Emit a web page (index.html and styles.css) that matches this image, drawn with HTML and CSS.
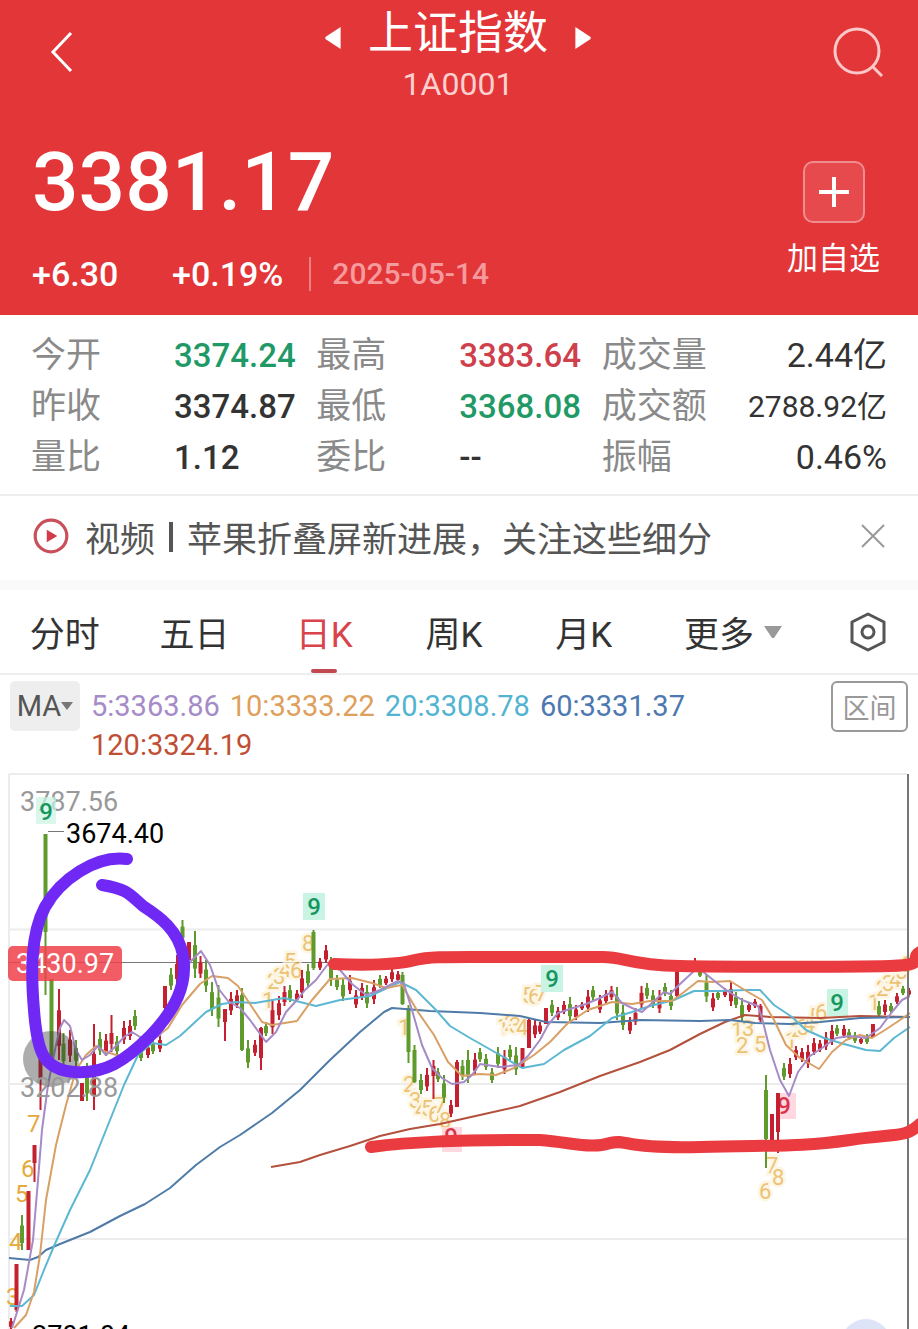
FILE: index.html
```
<!DOCTYPE HTML>
<html lang="zh-CN">
<head>
	<meta charset="UTF-8">
	<meta name="viewport" content="width=device-width, initial-scale=1">
	<title>上证指数</title>
	<link rel="stylesheet" href="styles.css">
</head>
<body>
	<header class="quote">
		<div class="bar">
			<button class="icon-btn" aria-label="返回">
				<svg width="24" height="44" viewBox="0 0 24 44"><path d="M21 3L3 22L21 41" fill="none" stroke="#fff" stroke-width="3"/></svg>
			</button>
			<div class="title">
				<div class="name">
					<button class="icon-btn" aria-label="上一个"><svg width="18" height="24" viewBox="0 0 16 22"><path d="M15 1V21L1 12V10Z" fill="#fff"/></svg></button>
					<h1>上证指数</h1>
					<button class="icon-btn" aria-label="下一个"><svg width="18" height="24" viewBox="0 0 16 22"><path d="M1 1V21L15 12V10Z" fill="#fff"/></svg></button>
				</div>
				<div class="code">1A0001</div>
			</div>
			<button class="icon-btn search" aria-label="搜索">
				<svg width="52" height="52" viewBox="0 0 52 52" fill="none" stroke="#fcc8c8" stroke-width="3"><circle cx="25" cy="25" r="22"/><path d="M41 41L50 50"/></svg>
			</button>
		</div>
		<div class="now">
			<div>
				<div class="price">3381.17</div>
				<div class="change">
					<span class="diff">+6.30</span>
					<span class="rate">+0.19%</span>
					<time>2025-05-14</time>
				</div>
			</div>
			<button class="add">
				<span class="plus"><svg width="30" height="30" viewBox="0 0 30 30"><path d="M15 0V30M0 15H30" stroke="#fff" stroke-width="4"/></svg></span>
				加自选
			</button>
		</div>
	</header>

	<dl class="stats">
		<div><dt>今开</dt><dd class="fall">3374.24</dd></div>
		<div><dt>最高</dt><dd class="rise">3383.64</dd></div>
		<div class="last"><dt>成交量</dt><dd>2.44亿</dd></div>
		<div><dt>昨收</dt><dd>3374.87</dd></div>
		<div><dt>最低</dt><dd class="fall">3368.08</dd></div>
		<div class="last"><dt>成交额</dt><dd class="long">2788.92亿</dd></div>
		<div><dt>量比</dt><dd>1.12</dd></div>
		<div><dt>委比</dt><dd>--</dd></div>
		<div class="last"><dt>振幅</dt><dd>0.46%</dd></div>
	</dl>

	<div class="news">
		<svg width="38" height="38" viewBox="0 0 36 36"><circle cx="18" cy="18" r="15" fill="none" stroke="#c9505b" stroke-width="3"/><path d="M14 12V24L24 18Z" fill="#d23c4a"/></svg>
		<a href="#">视频<i></i>苹果折叠屏新进展，关注这些细分</a>
		<button class="icon-btn" aria-label="关闭">
			<svg width="26" height="26" viewBox="0 0 26 26"><path d="M2 2L24 24M24 2L2 24" stroke="#999" stroke-width="2"/></svg>
		</button>
	</div>

	<nav class="tabs">
		<a href="#">分时</a>
		<a href="#">五日</a>
		<a class="active" href="#">日K</a>
		<a href="#">周K</a>
		<a href="#">月K</a>
		<a href="#">更多<svg width="20" height="14" viewBox="0 0 20 14"><path d="M1 1H19L11 13H9Z" fill="#999"/></svg></a>
		<button class="icon-btn" aria-label="设置">
			<svg width="38" height="40" viewBox="0 0 38 40" fill="none" stroke="#555" stroke-width="3" stroke-linejoin="round"><path d="M19 2L35 10V30L19 38L3 30V10Z"/><circle cx="19" cy="20" r="6"/></svg>
		</button>
	</nav>

	<div class="ma">
		<button class="ma-btn">MA<svg width="12" height="8" viewBox="0 0 12 8"><path d="M0 0H12L6 8Z" fill="#777"/></svg></button>
		<div class="ma-list">
			<span class="ma5">5:3363.86</span>
			<span class="ma10">10:3333.22</span>
			<span class="ma20">20:3308.78</span>
			<span class="ma60">60:3331.37</span>
			<span class="ma120">120:3324.19</span>
		</div>
		<button class="range">区间</button>
	</div>

	<svg class="chart" viewBox="0 770 918 559">
		<!-- grid -->
		<path class="grid" d="M9 774H907M9 929.500H907M9 1084H907M9 1239H907M9 774V1329"/>
		<path class="cross" d="M9 962.500H907"/>
		<text class="scale" x="20" y="811">3787.56</text>
		<rect x="36" y="797" width="20" height="27" fill="#c9f3e2" opacity=".7"/>
		<text class="nine" x="46" y="820">9</text>
		<path d="M48 831.500H64" stroke="#777"/>
		<text class="peak" x="66" y="843">3674.40</text>
		<text class="peak" x="32" y="1345">2701.04</text>

		<g class="seq">
			<text x="27" y="1132" font-size="24">7</text>
			<text x="21" y="1177" font-size="24">6</text>
			<text x="15" y="1202" font-size="24">5</text>
			<text x="9" y="1250" font-size="24">4</text>
			<text x="6" y="1305" font-size="24">3</text>
		</g>
		<g class="seq glow">
			<text x="262" y="1008">1</text><text x="267" y="989">2</text><text x="273" y="984">3</text><text x="279" y="977">4</text><text x="284" y="969">5</text><text x="290" y="978">6</text><text x="302" y="951">8</text>
			<text x="398" y="1035">1</text><text x="403" y="1092">2</text><text x="409" y="1108">3</text><text x="415" y="1117">4</text><text x="421" y="1116">5</text><text x="428" y="1122">6</text><text x="434" y="1113">7</text><text x="439" y="1128">8</text>
			<text x="497" y="1034">1</text><text x="504" y="1031">2</text><text x="509" y="1033">3</text><text x="516" y="1035">4</text><text x="522" y="1003">5</text><text x="528" y="1004">6</text><text x="535" y="1001">7</text>
			<text x="731" y="1038">1</text><text x="736" y="1053">2</text><text x="742" y="1036">3</text><text x="754" y="1052">5</text>
			<text x="759" y="1199">6</text><text x="766" y="1173">7</text><text x="772" y="1185">8</text>
			<text x="785" y="1048">1</text><text x="791" y="1037">2</text><text x="797" y="1035">3</text><text x="803" y="1031">4</text><text x="809" y="1024">5</text><text x="815" y="1020">6</text>
			<text x="868" y="1010">1</text><text x="876" y="996">2</text><text x="882" y="991">3</text><text x="889" y="987">4</text><text x="895" y="979">5</text><text x="900" y="972">6</text>
		</g>
		<g fill="#c9f3e2">
			<rect x="303" y="893" width="22" height="27"/>
			<rect x="541" y="965" width="22" height="27"/>
			<rect x="827" y="989" width="21" height="27"/>
		</g>
		<text class="nine" x="314" y="915">9</text>
		<text class="nine" x="552" y="987">9</text>
		<text class="nine" x="837" y="1011">9</text>
		<g fill="#ffd9df">
			<rect x="442" y="1127" width="20" height="25"/>
			<rect x="776" y="1093" width="20" height="26"/>
		</g>
		<text class="nine low" x="451" y="1145">9</text>
		<text class="nine low" x="784" y="1114">9</text>

		<g id="candles"></g>

		<!-- moving averages -->
		<g class="lines">
			<polyline class="ma120" points="271,1167 300,1162 320,1155 350,1146 380,1136 410,1129 440,1124 480,1115 520,1106 560,1092 600,1076 640,1062 670,1050 700,1034 725,1022 745,1015 770,1017 820,1018 860,1016 910,1017"/>
			<polyline class="ma60" points="9,1258 30,1260 38,1257 46,1250 60,1244 90,1232 120,1216 145,1204 170,1188 196,1165 220,1147 240,1135 272,1113 300,1090 330,1060 360,1032 384,1012 392,1008 430,1011 480,1013 520,1016 546,1022 600,1023 640,1020 700,1021 730,1020 755,1023 790,1024 820,1022 860,1018 910,1017"/>
			<polyline class="ma20" points="10,1306 22,1306 34,1295 44,1270 54,1246 70,1210 90,1170 106,1130 124,1085 138,1055 152,1043 166,1045 180,1036 206,1012 222,1004 236,1002 255,1003 284,998 316,1006 340,1000 370,996 400,982 416,990 436,1010 450,1026 470,1038 500,1055 522,1068 544,1064 564,1050 590,1036 612,1018 632,1012 650,1006 674,1000 694,991 720,991 746,990 760,990 774,1005 792,1017 806,1030 824,1038 844,1044 866,1050 880,1051 894,1038 910,1027"/>
			<polyline class="ma10" points="14,1328 26,1315 34,1292 40,1255 46,1200 56,1145 66,1105 76,1070 86,1055 96,1046 106,1052 120,1056 136,1045 155,1038 168,1028 182,1005 200,984 212,976 228,978 238,986 250,1004 262,1022 272,1025 297,1021 312,1000 330,979 352,978 372,983 386,988 402,985 418,1012 434,1035 448,1062 462,1076 480,1074 496,1075 514,1068 534,1055 550,1042 568,1023 588,1010 612,1002 632,1004 650,1001 672,1001 684,992 698,981 712,982 730,981 748,992 762,1000 774,1020 786,1045 800,1058 819,1069 832,1052 846,1040 860,1035 872,1038 885,1030 900,1020 910,1013"/>
			<polyline class="ma5" points="12,1328 24,1290 33,1240 38,1180 42,1130 48,1085 56,1045 60,1028 64,1020 70,1026 76,1050 82,1060 90,1055 98,1046 106,1055 116,1046 124,1037 132,1032 140,1037 150,1040 160,1035 170,1015 180,985 190,962 201,951 210,965 218,988 228,1001 240,1008 250,1020 266,1042 276,1032 286,1012 297,1000 305,990 316,980 328,964 340,970 352,984 366,995 380,990 398,981 404,984 412,1010 422,1045 432,1068 442,1078 452,1084 464,1082 472,1075 480,1064 500,1067 518,1065 528,1056 540,1040 548,1025 558,1013 570,1009 586,1004 600,998 612,992 622,1003 632,1008 642,1012 652,1003 664,992 670,994 680,984 694,971 702,971 712,979 726,990 742,1000 758,1006 762,1018 770,1050 780,1080 789,1096 798,1072 810,1056 822,1048 836,1038 850,1036 866,1038 880,1028 892,1012 902,1000 910,996"/>
		</g>
		<path d="M908 774V1329" stroke="#777" stroke-width="2"/>

		<rect x="8" y="946" width="114" height="35" rx="5" fill="#f0404a" opacity=".85"/>
		<text class="cursor" x="16" y="973">3430.97</text>
		<circle cx="51" cy="1059" r="28" fill="#333" opacity=".4"/>
		<text class="scale" x="20" y="1097">3202.88</text>
		<circle cx="866" cy="1344" r="25" fill="#dde4f8"/>

		<!-- pen marks -->
		<g class="pen">
			<path class="red" d="M334 964C380 966 400 964 415 960S450 957 520 957H600C625 956 625 965 680 966S850 967 890 966S908 958 920 952"/>
			<path class="red" d="M371 1147C410 1142 450 1140 540 1140C575 1143 592 1149 610 1143C630 1139 620 1149 700 1147S800 1147 850 1140S905 1138 920 1124"/>
			<path class="violet" d="M127 859C95 855 60 880 45 907C30 935 31 975 34 1010C37 1050 42 1070 75 1072C105 1074 125 1061 150 1036C175 1010 188 985 183 955C178 930 160 917 143 906C130 895 128 889 102 885"/>
		</g>
	</svg>
	<script src="chart.js"></script>
</body>
</html>
```
FILE: styles.css
```
* {
    box-sizing: border-box;
}
body {
    margin: 0;
    background: #fff;
    color: #333;
    font-family: Roboto, "Noto Sans CJK SC", sans-serif;
    overflow-x: hidden;
}
button {
    border: 0;
    padding: 0;
    background: none;
    color: inherit;
    font: inherit;
}
a {
    color: inherit;
    text-decoration: none;
}
svg {
    display: block;
}
.icon-btn {
    display: flex;
}

/* header */
.quote {
    height: 315px;
    padding: 0 38px 0 32px;
    background: #e23639;
    color: #fff;
}
.bar {
    display: grid;
    grid-template-columns: 1fr auto 1fr;
    align-items: center;
    height: 104px;
    margin-right: -4px;
}
.bar > .icon-btn {
    padding-left: 18px;
}
.bar > .search {
    justify-self: end;
}
.title {
    text-align: center;
}
.name {
    display: flex;
    align-items: center;
    gap: 26px;
    height: 64px;
    padding-top: 12px;
}
.name h1 {
    margin: -8px 0 0;
    font-size: 45px;
    font-weight: 400;
    line-height: 56px;
}
.code {
    font-size: 32px;
    line-height: 40px;
    color: #fdd0d0;
}
.now {
    display: flex;
    justify-content: space-between;
}
.price {
    padding-top: 28px;
    font-size: 82px;
    font-weight: 500;
    line-height: 100px;
}
.change {
    display: flex;
    align-items: center;
    padding-top: 22px;
    font-size: 34px;
    font-weight: 500;
    line-height: 40px;
}
.diff {
    width: 140px;
}
.change time {
    margin-left: 26px;
    padding-left: 21px;
    border-left: 2px solid #ef8082;
    font-size: 30px;
    line-height: 34px;
    color: #f59b9d;
}
.add {
    display: flex;
    flex-direction: column;
    align-items: center;
    padding-top: 57px;
    align-self: flex-start;
    font-size: 31px;
    line-height: 40px;
    gap: 16px;
}
.plus {
    display: grid;
    place-items: center;
    width: 62px;
    height: 62px;
    border: 2px solid #f08d8f;
    border-radius: 10px;
    background: #e64a4c;
}

/* figures */
.stats {
    display: grid;
    grid-template-columns: 1fr 1fr 1fr;
    margin: 0;
    padding: 15px 31px 11px;
    border-bottom: 2px solid #eee;
    line-height: 51px;
}
.stats div {
    display: flex;
}
.stats dt {
    width: 143px;
    font-size: 35px;
    color: #8a8a8a;
}
.stats dd {
    margin: 0;
    font-size: 33px;
    font-weight: 500;
}
.stats .last {
    justify-content: space-between;
}
.stats .last dt {
    width: auto;
}
.stats .last dd {
    font-weight: 400;
    font-size: 34px;
}
.stats .last .long {
    font-size: 30px;
}
.stats .fall {
    color: #1f9a67;
}
.stats .rise {
    color: #cf404d;
}

/* news */
.news {
    display: flex;
    align-items: center;
    height: 94px;
    padding: 0 32px 4px;
    border-bottom: 10px solid #fafafa;
    font-size: 35px;
    color: #555;
}
.news a {
    flex: 1;
    margin-left: 15px;
    white-space: nowrap;
}
.news i {
    display: inline-block;
    width: 4px;
    height: 30px;
    margin: 0 14px;
    background: #555;
}

/* tabs */
.tabs {
    display: grid;
    grid-template-columns: repeat(5, 13fr) 17fr 10fr;
    align-items: center;
    justify-items: center;
    height: 85px;
    border-bottom: 2px solid #eee;
    font-size: 35px;
}
.tabs a {
    display: flex;
    align-items: center;
    position: relative;
    height: 83px;
}
.tabs a svg {
    margin-left: 9px;
}
.tabs .active {
    color: #d9434c;
}
.active::after {
    content: "";
    position: absolute;
    left: 50%;
    bottom: 0;
    width: 26px;
    height: 4px;
    margin-left: -13px;
    border-radius: 2px;
    background: #c24852;
}

/* averages */
.ma {
    display: flex;
    align-items: flex-start;
    padding: 6px 10px 5px;
}
.ma-btn {
    display: flex;
    align-items: center;
    justify-content: center;
    width: 70px;
    height: 50px;
    border-radius: 5px;
    background: #eee;
    font-size: 29px;
    color: #555;
}
.ma-list {
    display: flex;
    flex: 1;
    flex-wrap: wrap;
    gap: 0 10px;
    padding: 6px 80px 0 11px;
    font-size: 29px;
    line-height: 39px;
}
.range {
    width: 77px;
    height: 51px;
    border: 2px solid #999;
    border-radius: 6px;
    font-size: 27px;
    color: #999;
}
.ma5 {
    color: #a58bc7;
    stroke: #a58bc7;
}
.ma10 {
    color: #dea05c;
    stroke: #d9a066;
}
.ma20 {
    color: #52b4d0;
    stroke: #5cb8d2;
}
.ma60 {
    color: #4d78b0;
    stroke: #4f7ba8;
}
.ma120 {
    color: #bf4f34;
    stroke: #b4513c;
}

/* chart */
.chart {
    width: 100%;
    overflow: hidden;
}
.grid {
    fill: none;
    stroke: #ececec;
    stroke-width: 2;
}
.cross {
    stroke: #777;
}
.scale,
.peak,
.cursor {
    font-size: 27px;
}
.scale {
    fill: #999;
}
.peak {
    fill: #000;
}
.cursor {
    fill: #fff;
}
.nine {
    fill: #15965f;
    font-size: 24px;
    font-weight: 500;
    text-anchor: middle;
}
.low {
    fill: #d8344a;
}
.seq {
    fill: #e5a93c;
    font-size: 22px;
}
.glow {
    opacity: .7;
    paint-order: stroke;
    stroke: #fdf3da;
    stroke-width: 5;
}
.lines {
    fill: none;
    stroke-width: 2;
    stroke-linejoin: round;
}
.up {
    fill: #c4202f;
}
.down {
    fill: #5f9a2c;
}
.pen {
    fill: none;
    stroke-linecap: round;
    stroke-linejoin: round;
    stroke-width: 12;
}
.red {
    stroke: #ea3b40;
}
.violet {
    stroke: #7029f5;
}
```
FILE: chart.js
```
// x, high, low, [body top, body bottom]; g = falling day, r = rising day
var days = [
	'r 11 1318 1329', 'r 16.500 1264 1312 1264 1310', 'g 22 1215 1250', 'r 28.500 1191 1250 1191 1250', 'r 34.500 1145 1182 1145 1163',
	'r 40.500 1058 1110 1058 1078', 'g 45.500 834 995 834 932', 'g 51.500 979 1062 979 1062', 'r 59 989 1060', 'g 63.500 1033 1068',
	'r 70 1030 1062', 'g 76 1040 1066', 'r 82 1083 1101 1083 1101', 'g 87 1063 1101', 'r 94 1024 1110 1054 1095', 'g 100 1032 1055',
	'r 106 1034 1056', 'r 111.500 1015 1052 1033 1044', 'g 117 1036 1055', 'r 124 1021 1044', 'r 130 1020 1040', 'g 135 1010 1030',
	'g 141 1046 1061', 'r 148 1043 1058', 'g 153 1040 1054', 'r 160 1035 1052', 'r 165 986 1010 986 1008', 'g 171 968 990',
	'r 177 955 985', 'g 182.500 920 942', 'r 189 942 960 942 960', 'g 195 931 978', 'r 200.500 956 978', 'g 206 960 992',
	'g 212 982 1016', 'g 218.500 985 1027', 'r 225 1009 1041 1009 1022', 'r 231 992 1015', 'r 237 990 1008', 'g 242 988 1051 995 1050',
	'g 248 1040 1068', 'r 255 1040 1056', 'r 261 1027 1070 1028 1058', 'g 266 1022 1036', 'r 272.500 1000 1034', 'r 279 996 1020',
	'r 284.500 986 1006', 'g 290 985 1002', 'r 297 990 1002', 'r 302 970 998', 'g 308 964 988', 'g 313.500 930 970 932 968',
	'r 320 958 970', 'r 326 945 963', 'g 331 957 986', 'g 337 975 990', 'g 343 978 1001', 'r 350 975 994', 'r 356 990 1008',
	'r 362 983 1000', 'g 367 985 1008', 'r 374 980 1004', 'g 380 975 988', 'r 386 976 985', 'r 392 968 982', 'r 398 971 982',
	'g 402.500 972 1005 975 1004', 'g 408.500 1005 1063 1008 1052', 'g 414.500 1045 1083 1050 1082', 'g 421 1074 1094', 'r 427 1068 1091',
	'r 433.500 1060 1099 1066 1076', 'g 438 1068 1082', 'g 444 1075 1103', 'r 451 1100 1117', 'r 457 1060 1107 1062 1107', 'g 462.500 1060 1080',
	'g 468 1050 1083', 'r 475 1053 1075', 'g 480 1048 1062', 'g 486 1054 1070', 'g 492 1068 1083', 'g 498 1047 1068', 'r 504.500 1050 1074',
	'g 510 1045 1060', 'g 516 1047 1075', 'r 522.500 1048 1068 1048 1068', 'r 529 1018 1048 1020 1048', 'r 535 1020 1038', 'r 540 1022 1034',
	'r 546 1008 1024 1008 1024', 'g 552 1000 1016', 'r 558 1007 1020', 'r 564 1001 1014', 'g 570 997 1021', 'r 576 1005 1020',
	'r 582 1002 1010', 'r 588 990 1012', 'g 593 986 1000', 'r 600 995 1013', 'r 606 990 1004', 'r 611.500 986 1000', 'g 617 987 1020',
	'g 623 1005 1030', 'r 630 1017 1034', 'r 635.500 1008 1025', 'r 641.500 986 1009', 'g 647 983 999', 'g 653 990 1008', 'r 659.500 990 1013',
	'g 665 983 996', 'g 671 990 1010', 'r 677 970 998 970 996', 'r 695 958 968', 'g 700 970 977', 'g 706.500 974 1002', 'r 713 993 1011',
	'g 718 990 1000', 'r 725 988 997', 'r 731 982 1006', 'g 736 992 1008', 'g 742 998 1022', 'r 749 1002 1012', 'r 755 999 1008',
	'r 760.500 1004 1022 1006 1020', 'g 766 1075 1168 1090 1139', 'r 772 1114 1140 1114 1140', 'r 778 1093 1153 1093 1132', 'g 784 1063 1080',
	'r 790 1058 1078', 'r 796 1046 1060', 'r 802 1048 1062', 'r 808 1045 1068', 'r 814 1038 1055', 'r 820 1040 1052', 'r 826 1032 1050',
	'r 832 1025 1045', 'g 837 1025 1036', 'r 844 1025 1038', 'g 849 1029 1040', 'g 855 1032 1043', 'r 861 1037 1044', 'g 867 1034 1044',
	'r 873 1024 1038 1024 1037', 'g 879 1001 1018', 'r 885 1000 1015', 'g 891 1003 1013', 'r 897 993 1004', 'g 903 986 995', 'r 909 988 996'
];

var box = document.getElementById('candles');

function bar(name, x, top, bottom, width) {
	var rect = document.createElementNS('http://www.w3.org/2000/svg', 'rect');
	rect.setAttribute('class', name);
	rect.setAttribute('x', x - width / 2);
	rect.setAttribute('y', top);
	rect.setAttribute('width', width);
	rect.setAttribute('height', bottom - top);
	box.appendChild(rect);
}

for (var i = 0; i < days.length; i++) {
	var d = days[i].split(' ');
	var name = d[0] == 'r' ? 'up' : 'down';
	var high = +d[2];
	var low = +d[3];
	var top1 = d[4] ? +d[4] : high + (low - high) * 0.3;
	var bottom1 = d[5] ? +d[5] : low - (low - high) * 0.2;
	bar(name, +d[1], high, low, 2);
	bar(name, +d[1], top1, bottom1, 4);
}
```
